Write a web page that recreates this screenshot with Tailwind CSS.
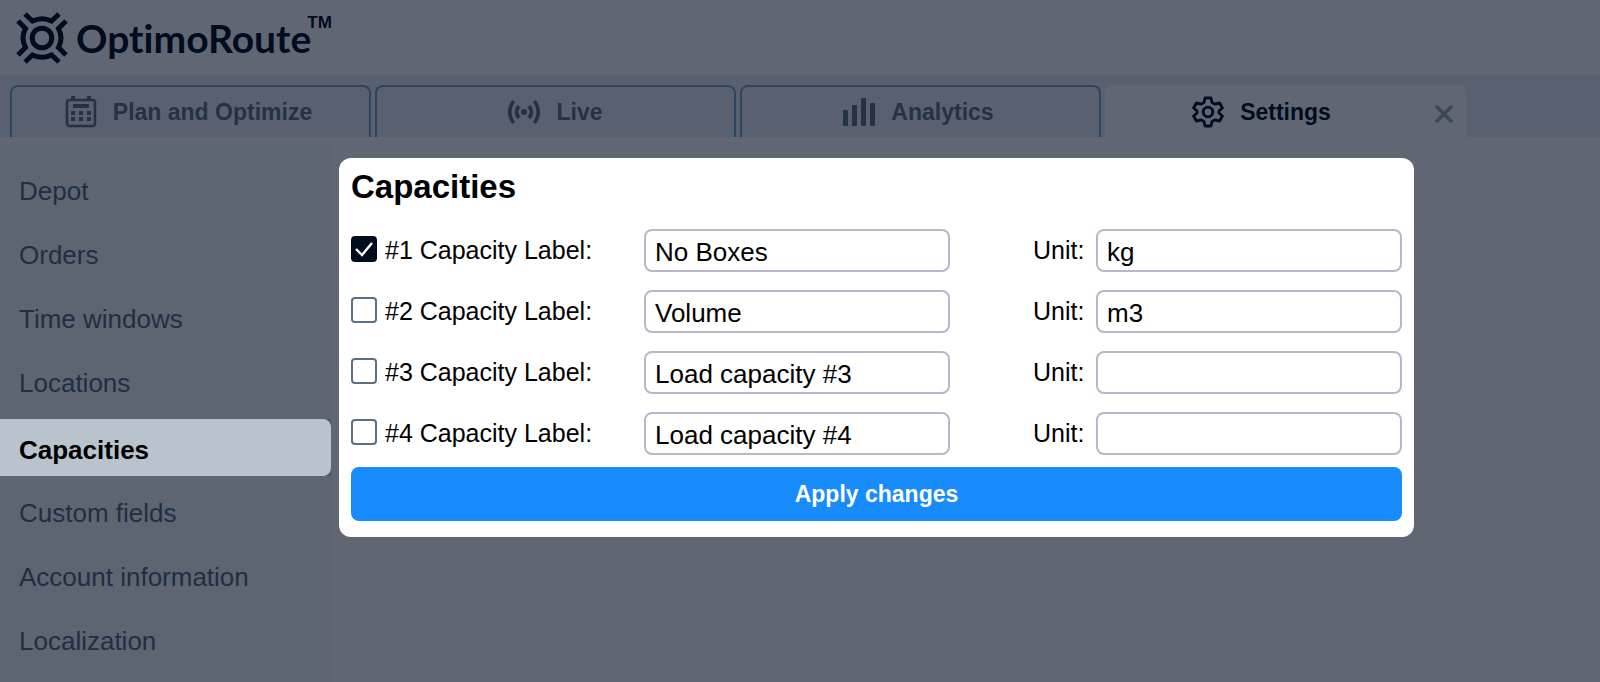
<!DOCTYPE html>
<html lang="en">
<head>
  <meta charset="UTF-8" />
  <title>OptimoRoute - Settings</title>
  <meta name="viewport" content="width=device-width, initial-scale=1.0"/>
  <script src="https://cdn.jsdelivr.net/npm/@tailwindcss/browser@4"></script>
</head>
<body class="flex min-h-screen flex-col bg-[#616772] font-['Liberation_Sans',Arial,sans-serif] text-black">

  <header class="flex h-[75px] items-center pl-4">
    <a href="#" class="flex items-center gap-2 text-[#020c1f]">
      <svg class="size-[52px]" viewBox="0 0 52 52" fill="none" stroke="currentColor" stroke-width="5">
        <circle cx="26" cy="26" r="9.800"/>
        <path d="M9 2l7.500 7q9.500-4.500 19 0L43 2M9 50l7.500-7q9.500 4.500 19 0L43 50M2 9l7.500 7.500q-5 9.500 0 19L2 43M50 9l-7.500 7.500q5 9.500 0 19L50 43"/>
      </svg>
      <span class="flex items-start">
        <span class="font-[Lato] text-[39px] leading-[44px] font-bold [font-variant-ligatures:none]">OptimoRoute</span>
        <span class="-mt-1.5 -ml-1 text-[17px] font-bold">TM</span>
      </span>
    </a>
  </header>

  <nav class="flex h-[62px] items-end gap-1 bg-[#596170] pl-[10px] text-[23px] font-bold text-[#243243]">
    <a href="#" class="flex h-[52px] max-w-[361px] flex-1 items-center justify-center gap-4 rounded-t-lg border-2 border-b-0 border-[#2d4660] pr-1">
      <svg class="size-8" viewBox="0 0 32 32" fill="currentColor">
        <rect x="2" y="4" width="28" height="26" rx="2.5" fill="none" stroke="currentColor" stroke-width="2.6"/>
        <path d="M6 0h4v4H6zM22 0h4v4h-4zM8 8h16v4H8zM6 15h4v4H6zM14 15h4v4h-4zM22 15h4v4h-4zM6 21h4v4H6zM14 21h4v4h-4zM22 21h4v4h-4z"/>
      </svg>
      Plan and Optimize
    </a>
    <a href="#" class="flex h-[52px] max-w-[361px] flex-1 items-center justify-center gap-4 rounded-t-lg border-2 border-b-0 border-[#2d4660]">
      <svg class="size-8" viewBox="0 0 32 32" fill="none" stroke="currentColor" stroke-width="3.6">
        <circle cx="16" cy="16" r="3" fill="currentColor" stroke="none"/>
        <path d="M11 10q-5 6 0 12M21 10q5 6 0 12M5.500 5q-7.500 11 0 22M26.500 5q7.500 11 0 22"/>
      </svg>
      Live
    </a>
    <a href="#" class="flex h-[52px] max-w-[361px] flex-1 items-center justify-center gap-4 rounded-t-lg border-2 border-b-0 border-[#2d4660] pr-1">
      <svg class="size-8" viewBox="0 0 32 32" fill="currentColor">
        <rect x="0" y="14" width="5" height="16" rx="1"/>
        <rect x="9" y="9" width="5" height="21" rx="1"/>
        <rect x="18" y="2" width="5" height="28" rx="1"/>
        <rect x="27" y="7" width="5" height="23" rx="1"/>
      </svg>
      Analytics
    </a>
    <div class="relative flex h-[52px] max-w-[361px] flex-1 rounded-t-lg bg-[#616772]">
      <a href="#" class="flex flex-1 items-center justify-center gap-4 pt-0.5 pr-12 text-[#020c1f]">
        <svg class="size-8" viewBox="0 0 32 32" fill="none" stroke="currentColor" stroke-width="2.8" stroke-linejoin="round">
          <circle cx="16" cy="16" r="4.800"/>
          <path d="M13 2h6l1 4.500 3 1.700 4.400-1.400 3 5.200-3.400 3v2l3.400 3-3 5.200-4.400-1.400-3 1.700-1 4.500h-6l-1-4.500-3-1.700-4.400 1.400-3-5.200 3.400-3v-2l-3.400-3 3-5.200 4.400 1.400 3-1.700z"/>
        </svg>
        Settings
      </a>
      <button type="button" aria-label="Close tab" class="absolute top-[19px] right-3 text-[#3c4858]">
        <svg class="size-5" viewBox="0 0 20 20" stroke="currentColor" stroke-width="3.6"><path d="M2 2l16 16M18 2L2 18"/></svg>
      </button>
    </div>
  </nav>

  <div class="flex flex-1 pt-2">
    <aside class="w-[331px] shrink-0 bg-[#5d6570] pt-[18px] text-[26px] text-[#1f2f43]">
      <ul class="flex flex-col gap-[7px]">
        <li><a href="#" class="flex h-[57px] items-center pl-[19px]">Depot</a></li>
        <li><a href="#" class="flex h-[57px] items-center pl-[19px]">Orders</a></li>
        <li><a href="#" class="flex h-[57px] items-center pl-[19px]">Time windows</a></li>
        <li><a href="#" class="flex h-[57px] items-center pl-[19px]">Locations</a></li>
        <li class="mb-0.5 bg-[#4a5566]"><a href="#" class="flex h-[57px] items-center rounded-r-lg bg-[#b9c3cd] pt-1.5 pl-[19px] font-bold text-black">Capacities</a></li>
        <li><a href="#" class="flex h-[57px] items-center pl-[19px]">Custom fields</a></li>
        <li><a href="#" class="flex h-[57px] items-center pl-[19px]">Account information</a></li>
        <li><a href="#" class="flex h-[57px] items-center pl-[19px]">Localization</a></li>
      </ul>
    </aside>

    <main class="flex-1 pt-[13px] pl-2">
      <form class="max-w-[1075px] rounded-xl bg-white px-3 pt-2 pb-4">
        <h1 class="mb-[22px] text-[33px] leading-[41px] font-bold">Capacities</h1>

        <div class="mb-3 grid grid-cols-[293px_1fr_146px_1fr] items-center gap-y-[18px] text-[25px]">
          <div class="flex items-center gap-2">
            <span class="relative -mt-1 flex">
              <input id="cap1" type="checkbox" checked class="peer size-[26px] appearance-none rounded border-2 border-[#5b6f85] bg-white checked:border-[#020c1f] checked:bg-[#020c1f]" />
              <svg class="pointer-events-none absolute inset-0 hidden size-[26px] peer-checked:block" viewBox="0 0 26 26" fill="none" stroke="white" stroke-width="2.4"><path d="M5 13l6 6L21 7"/></svg>
            </span>
            <label for="cap1">#1 Capacity Label:</label>
          </div>
          <input type="text" aria-label="#1 Capacity Label" value="No Boxes" class="h-[43px] w-full min-w-0 rounded-lg border-2 border-[#b7b7cb] px-[9px] pt-1 text-[26px]" />
          <label for="unit1" class="pl-[83px]">Unit:</label>
          <input id="unit1" type="text" value="kg" class="h-[43px] w-full min-w-0 rounded-lg border-2 border-[#b7b7cb] px-[9px] pt-1 text-[26px]" />

          <div class="flex items-center gap-2">
            <span class="relative -mt-1 flex">
              <input id="cap2" type="checkbox" class="peer size-[26px] appearance-none rounded border-2 border-[#5b6f85] bg-white checked:border-[#020c1f] checked:bg-[#020c1f]" />
              <svg class="pointer-events-none absolute inset-0 hidden size-[26px] peer-checked:block" viewBox="0 0 26 26" fill="none" stroke="white" stroke-width="2.4"><path d="M5 13l6 6L21 7"/></svg>
            </span>
            <label for="cap2">#2 Capacity Label:</label>
          </div>
          <input type="text" aria-label="#2 Capacity Label" value="Volume" class="h-[43px] w-full min-w-0 rounded-lg border-2 border-[#b7b7cb] px-[9px] pt-1 text-[26px]" />
          <label for="unit2" class="pl-[83px]">Unit:</label>
          <input id="unit2" type="text" value="m3" class="h-[43px] w-full min-w-0 rounded-lg border-2 border-[#b7b7cb] px-[9px] pt-1 text-[26px]" />

          <div class="flex items-center gap-2">
            <span class="relative -mt-1 flex">
              <input id="cap3" type="checkbox" class="peer size-[26px] appearance-none rounded border-2 border-[#5b6f85] bg-white checked:border-[#020c1f] checked:bg-[#020c1f]" />
              <svg class="pointer-events-none absolute inset-0 hidden size-[26px] peer-checked:block" viewBox="0 0 26 26" fill="none" stroke="white" stroke-width="2.4"><path d="M5 13l6 6L21 7"/></svg>
            </span>
            <label for="cap3">#3 Capacity Label:</label>
          </div>
          <input type="text" aria-label="#3 Capacity Label" value="Load capacity #3" class="h-[43px] w-full min-w-0 rounded-lg border-2 border-[#b7b7cb] px-[9px] pt-1 text-[26px]" />
          <label for="unit3" class="pl-[83px]">Unit:</label>
          <input id="unit3" type="text" class="h-[43px] w-full min-w-0 rounded-lg border-2 border-[#b7b7cb] px-[9px] pt-1 text-[26px]" />

          <div class="flex items-center gap-2">
            <span class="relative -mt-1 flex">
              <input id="cap4" type="checkbox" class="peer size-[26px] appearance-none rounded border-2 border-[#5b6f85] bg-white checked:border-[#020c1f] checked:bg-[#020c1f]" />
              <svg class="pointer-events-none absolute inset-0 hidden size-[26px] peer-checked:block" viewBox="0 0 26 26" fill="none" stroke="white" stroke-width="2.4"><path d="M5 13l6 6L21 7"/></svg>
            </span>
            <label for="cap4">#4 Capacity Label:</label>
          </div>
          <input type="text" aria-label="#4 Capacity Label" value="Load capacity #4" class="h-[43px] w-full min-w-0 rounded-lg border-2 border-[#b7b7cb] px-[9px] pt-1 text-[26px]" />
          <label for="unit4" class="pl-[83px]">Unit:</label>
          <input id="unit4" type="text" class="h-[43px] w-full min-w-0 rounded-lg border-2 border-[#b7b7cb] px-[9px] pt-1 text-[26px]" />
        </div>

        <button type="submit" class="h-[54px] w-full rounded-lg bg-[#188bfd] text-[23px] font-bold text-white">Apply changes</button>
      </form>
    </main>
  </div>

</body>
</html>
